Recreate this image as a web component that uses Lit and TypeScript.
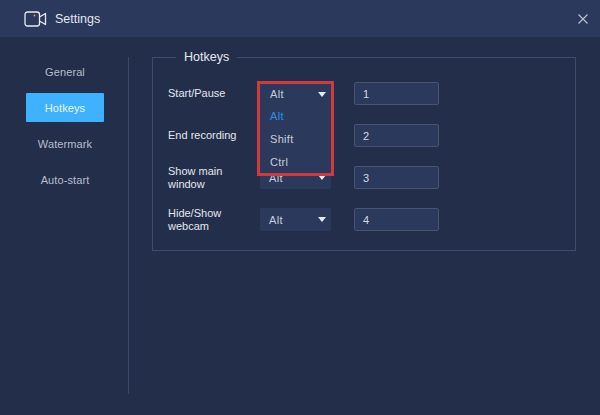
import { LitElement, html, css, svg } from "lit";
import { customElement } from "lit/decorators.js";

const ROWS = [
  { label: "Start/Pause", key: "1" },
  { label: "End recording", key: "2" },
  { label: "Show main window", key: "3" },
  { label: "Hide/Show webcam", key: "4" },
];
const NAV = ["General", "Hotkeys", "Watermark", "Auto-start"];

@customElement("app-root")
export class AppRoot extends LitElement {
  static styles = css`
    :host {
      display: block;
      width: 600px;
      height: 415px;
      background: #232e4b;
      color: #e6e9f0;
      font-family: "Liberation Sans", Arial, sans-serif;
      font-size: 12px;
      overflow: hidden;
    }
    .header {
      height: 37px;
      background: #2b395d;
      display: flex;
      align-items: center;
      padding: 0 12px 0 24px;
      gap: 8px;
    }
    .title { font-size: 12.5px; color: #e4e7ee; flex: 1; }
    .logo { display: block; }
    .close { display: block; }
    .body { display: flex; height: 378px; }
    .side {
      width: 128px;
      height: 337px;
      margin-top: 20px;
      border-right: 1px solid #3c486a;
    }
    .navlist { margin-top: -4px; }
    .nav {
      width: 78px;
      margin-left: 26px;
      height: 36px;
      display: flex;
      align-items: center;
      justify-content: center;
      font-size: 11px;
      letter-spacing: 0.1px;
      color: #b7bdcc;
    }
    .nav span {
      width: 78px;
      height: 28px;
      padding-top: 1px;
      border-radius: 1px;
      display: flex;
      align-items: center;
      justify-content: center;
    }
    .nav.active span { background: #3fb2ff; color: #eaf6ff; }
    .main { position: relative; padding: 12px 0 0 23px; }
    fieldset {
      width: 424px;
      height: 202px;
      box-sizing: border-box;
      margin: 0;
      padding: 17px 0 0 15px;
      border: 1px solid #3f4b6d;
      min-width: 0;
    }
    legend {
      margin-left: 8px;
      padding: 0 8px;
      font-size: 12.5px;
      line-height: 16px;
      color: #e6e9f0;
    }
    .rows { display: flex; flex-direction: column; gap: 19px; }
    .row { display: flex; align-items: center; height: 23px; }
    .label { width: 92px; line-height: 13px; font-size: 11px; color: #e3e6ed; }
    .select {
      width: 71px;
      height: 23px;
      background: #2b395d;
      border-radius: 2px;
      display: flex;
      align-items: center;
      justify-content: space-between;
      padding: 0 5px 0 9px;
      box-sizing: border-box;
      margin-right: 23px;
      font-size: 11px;
      letter-spacing: 0.3px;
      color: #c8cdd9;
    }
    .caret {
      width: 0;
      height: 0;
      border-left: 4px solid transparent;
      border-right: 4px solid transparent;
      border-top: 5px solid #e6e9f0;
    }
    .key {
      width: 85px;
      height: 23px;
      box-sizing: border-box;
      background: #2b395d;
      border: 1px solid #47536f;
      border-radius: 2px;
      padding-left: 8px;
      display: flex;
      align-items: center;
      font-size: 11px;
      color: #d4d8e2;
    }
    .menu {
      position: absolute;
      left: 128px;
      top: 44px;
      width: 77px;
      height: 95px;
      box-sizing: border-box;
      border: 3px solid #d0393e;
      background: #2b395d;
      font-size: 11px;
      letter-spacing: 0.3px;
      color: #c8cdd9;
      padding-left: 10px;
    }
    .menu div { height: 23px; display: flex; align-items: center; }
    .menu .head { height: 20px; justify-content: space-between; padding-right: 5px; }
    .menu .sel { color: #2a8fe6; }
  `;

  render() {
    return html`
      <div class="header">
        ${this.logo()}
        <div class="title">Settings</div>
        <svg class="close" width="10" height="10" viewBox="0 0 10 10">
          <path d="M0.5 0.5 L9.5 9.5 M9.5 0.5 L0.5 9.5" stroke="#b8c0d2" stroke-width="1.2" fill="none" />
        </svg>
      </div>
      <div class="body">
        <div class="side">
          <div class="navlist">
            ${NAV.map(
              (n) => html`<div class="nav ${n === "Hotkeys" ? "active" : ""}"><span>${n}</span></div>`
            )}
          </div>
        </div>
        <div class="main">
          <fieldset>
            <legend>Hotkeys</legend>
            <div class="rows">
              ${ROWS.map(
                (r) => html`<div class="row">
                  <div class="label">${r.label}</div>
                  <div class="select"><span>Alt</span><i class="caret"></i></div>
                  <div class="key">${r.key}</div>
                </div>`
              )}
            </div>
          </fieldset>
          <div class="menu">
            <div class="head"><span>Alt</span><i class="caret"></i></div>
            <div class="sel">Alt</div>
            <div>Shift</div>
            <div>Ctrl</div>
          </div>
        </div>
      </div>
    `;
  }

  logo() {
    return svg`<svg class="logo" width="23" height="16" viewBox="0 0 23 16">
      <rect x="1" y="1" width="14.5" height="14" rx="2.5" fill="none" stroke="#e8ebf1" stroke-width="1.3"/>
      <path d="M15.5 6 L21.5 2.5 V13.5 L15.5 10" fill="none" stroke="#e8ebf1" stroke-width="1.3" stroke-linejoin="round"/>
      <circle cx="10.5" cy="4.5" r="0.9" fill="#f0a830"/>
    </svg>`;
  }
}
